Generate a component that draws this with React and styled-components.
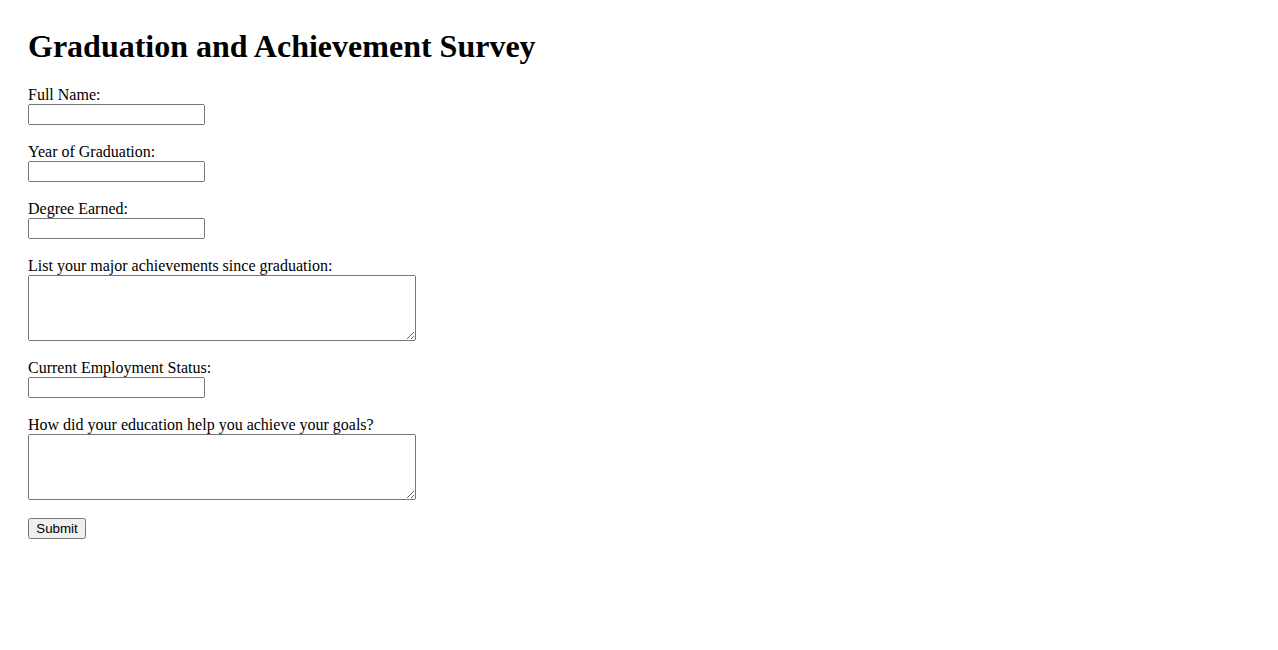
import styled, { createGlobalStyle } from "styled-components";

const GlobalStyle = createGlobalStyle`
  body {
    margin: 8px;
    font-family: "Liberation Serif", "Times New Roman", serif;
    font-size: 16px;
    color: #000;
    background: #fff;
  }
`;

const Page = styled.div`
  padding: 20px;
`;

const Title = styled.h1`
  font-size: 32px;
  font-weight: bold;
  margin: 0 0 21.44px;
`;

const Form = styled.form`
  display: flex;
  flex-direction: column;
  align-items: flex-start;
`;

const Field = styled.div`
  margin-bottom: 18px;
`;

const Label = styled.label`
  display: block;
  line-height: 18px;
`;

const Input = styled.input`
  display: block;
  box-sizing: border-box;
  width: 177px;
  height: 21px;
  margin: 0;
  font-family: "Liberation Sans", Arial, sans-serif;
  font-size: 13.33px;
`;

const TextArea = styled.textarea`
  display: block;
  box-sizing: border-box;
  width: 388px;
  height: 66px;
  margin: 0;
  font-family: "Liberation Mono", monospace;
  font-size: 13.33px;
`;

const Button = styled.button`
  box-sizing: border-box;
  height: 21px;
  width: 58px;
  padding: 1px 6px;
  margin: 0;
  font-family: "Liberation Sans", Arial, sans-serif;
  font-size: 13.33px;
`;

const fields = [
  { id: "name", label: "Full Name:" },
  { id: "year", label: "Year of Graduation:" },
  { id: "degree", label: "Degree Earned:" },
  { id: "achievements", label: "List your major achievements since graduation:", long: true },
  { id: "employment", label: "Current Employment Status:" },
  { id: "education", label: "How did your education help you achieve your goals?", long: true },
];

const App = () => {
  return (
    <>
      <GlobalStyle />
      <Page>
        <Title>Graduation and Achievement Survey</Title>
        <Form onSubmit={(e) => e.preventDefault()}>
          {fields.map((f) => (
            <Field key={f.id}>
              <Label htmlFor={f.id}>{f.label}</Label>
              {f.long ? <TextArea id={f.id} /> : <Input id={f.id} type="text" />}
            </Field>
          ))}
          <Button type="submit">Submit</Button>
        </Form>
      </Page>
    </>
  );
};

export default App;
